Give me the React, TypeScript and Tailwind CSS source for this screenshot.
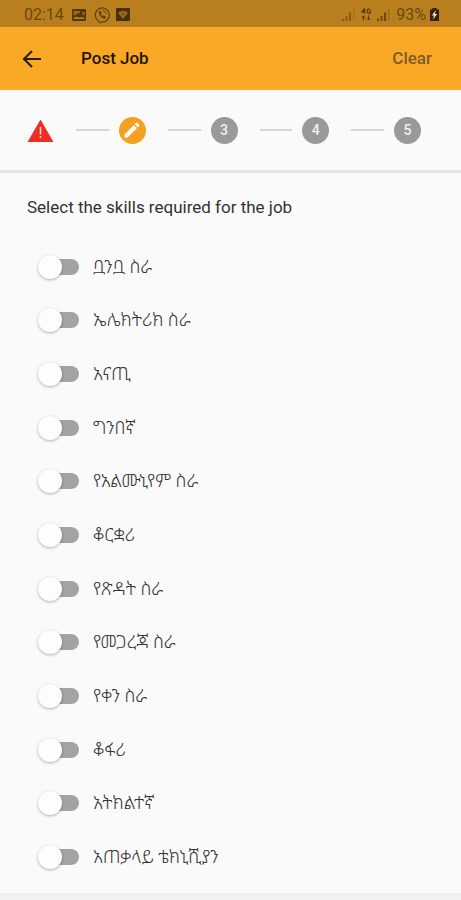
import { useState } from "react";

const skills = [
	{ id: 1, name: "ቧንቧ ስራ" },
	{ id: 2, name: "ኤሌክትሪክ ስራ" },
	{ id: 3, name: "አናጢ" },
	{ id: 4, name: "ግንበኛ" },
	{ id: 5, name: "የአልሙኒየም ስራ" },
	{ id: 6, name: "ቆርቋሪ" },
	{ id: 7, name: "የጽዳት ስራ" },
	{ id: 8, name: "የመጋረጃ ስራ" },
	{ id: 9, name: "የቀን ስራ" },
	{ id: 10, name: "ቆፋሪ" },
	{ id: 11, name: "አትክልተኛ" },
	{ id: 12, name: "አጠቃላይ ቴክኒሺያን" },
];

const SignalIcon = ({ className }: { className: string }) => (
	<svg viewBox="0 0 13 12" fill="currentColor" className={className}>
		<path d="M0 9.5h2V12H0zM3.5 7h2v5h-2zM7 3.5h2V12H7z" />
		<path d="M11 0h1.5v12H11z" opacity="0.35" />
	</svg>
);

const StatusBar = () => (
	<div className="flex h-[27px] items-center bg-[#b97f1e] pr-[22px] pl-6 pt-0.5 text-base text-[#6b480e]">
		<span>02:14</span>
		<svg viewBox="0 0 14 12" className="ml-2 h-3 w-3.5">
			<rect width="14" height="12" rx="1" fill="#53370a" />
			<path d="M1.5 10V9l3-1.500 2.500 1L9.500 8l3 1v1z" fill="#b97f1e" />
			<path d="M1.500 2h7l-1 2-2 .5-2 1.500-2 .5zM10 3h2.500v3l-2 .5z" fill="#9b6a18" />
		</svg>
		<svg
			viewBox="0 0 16 16"
			fill="none"
			stroke="#5f400c"
			className="ml-2 h-4 w-4"
		>
			<path
				d="M5 14.2A7 7 0 1 1 8 15l-3 .8z"
				strokeWidth="1.2"
				strokeLinejoin="round"
			/>
			<path
				d="M5 4.5c-.8 2.5 2.8 7 5.8 7l1-1.8-2-1.2-1 .8C7.800 8.900 6.900 7.900 6.700 6.900l.8-.8-1-2z"
				fill="#5f400c"
				strokeWidth="0.5"
			/>
			<path d="M8.500 3.500c2 .2 3.300 1.500 3.500 3.500" />
		</svg>
		<svg viewBox="0 0 14 13" className="ml-1.5 h-[13px] w-3.5">
			<rect width="14" height="13" rx="1" fill="#49300a" />
			<path d="M2 5c3-3 7-3 10 0l-5 6z" fill="#97681a" />
			<path d="M6 5.500h2V7H6z" fill="#6b480e" />
		</svg>

		<SignalIcon className="ml-auto h-3 w-[13px] opacity-60" />
		<svg viewBox="0 0 10 13" className="ml-1.5 h-[13px] w-2.5" fill="none" stroke="#53370a">
			<path d="M3.500 5.500V.8L.8 4h3.700" strokeWidth="1.200" />
			<path d="M9.300 1.500C8 .5 6 1 6 3s2 2.800 3.300 2V3.300H8" strokeWidth="1.200" />
			<path d="M2.500 12.500V8M.8 9.700 2.500 8l1.700 1.700M7.500 7.500V12M5.800 10.300 7.500 12l1.700-1.700" />
		</svg>
		<SignalIcon className="ml-1.5 h-3 w-[13px]" />
		<span className="ml-1.5">93%</span>
		<svg viewBox="0 0 9 13" className="ml-1 h-[13px] w-[9px]">
			<path d="M2.500 0h4v1.500H9V13H0V1.500h2.500z" fill="#352204" />
			<path d="M5.800 2 1.800 7.500h2.200L3 11.500 7.200 6H5z" fill="#f0ddb5" />
		</svg>
	</div>
);

const Connector = () => (
	<li aria-hidden="true" className="mr-2.5 ml-[22px] h-0.5 flex-1 bg-[#d6d6d6]" />
);

const NumberStep = ({ value }: { value: number }) => (
	<>
		<Connector />
		<li className="flex size-[27px] items-center justify-center rounded-full bg-[#999999] text-sm font-medium text-[#f0f0f0]">
			{value}
		</li>
	</>
);

const Stepper = () => (
	<ol className="flex h-20 items-center pr-10 pl-[27px]">
		<li className="flex size-[27px] items-center justify-center">
			<svg viewBox="0 0 27 27" className="size-[27px]" role="img" aria-label="Step 1 has errors">
				<path d="M13.500 2.500 26.500 25H.5z" fill="#f02d23" />
				<path d="M12.700 10h1.600v7.500h-1.600zM12.700 19h1.600v2h-1.600z" fill="#fbd5d2" />
			</svg>
		</li>
		<Connector />
		<li className="flex size-[27px] items-center justify-center rounded-full bg-[#f3a11f]">
			<svg viewBox="0 0 24 24" fill="#fff" className="size-5" role="img" aria-label="Editing step 2">
				<path d="M3 17.250V21h3.750L17.810 9.940l-3.750-3.750L3 17.250zM20.710 7.040c.39-.39.39-1.020 0-1.410l-2.340-2.340a1 1 0 0 0-1.410 0l-1.830 1.830 3.750 3.750 1.830-1.830z" />
			</svg>
		</li>
		<NumberStep value={3} />
		<NumberStep value={4} />
		<NumberStep value={5} />
	</ol>
);

const App = () => {
	const [selected, setSelected] = useState<number[]>([]);

	const toggle = (id: number) =>
		setSelected((prev) =>
			prev.includes(id) ? prev.filter((s) => s !== id) : [...prev, id],
		);

	return (
		<div className="flex min-h-screen flex-col bg-[#fafafa] font-[Roboto,'Noto_Sans_Ethiopic','Noto_Sans',sans-serif] text-[#333333]">
			<StatusBar />

			{/* App bar */}
			<header className="flex h-[63px] items-center bg-[#faa926] pr-[29px] pl-[22px]">
				<button type="button" aria-label="Back" className="text-[#2a1c04]">
					<svg viewBox="0 0 20 20" fill="none" stroke="currentColor" strokeWidth="2" className="size-5">
						<path d="M19 10H2.500M10 2 2 10l8 8" />
					</svg>
				</button>
				<h1 className="ml-[39px] text-[17px] font-medium text-[#1f1503]">Post Job</h1>
				<button
					type="button"
					className="ml-auto text-[17px] font-medium text-[#80592b]"
					onClick={() => setSelected([])}
				>
					Clear
				</button>
			</header>

			<Stepper />

			{/* Skills */}
			<main className="flex flex-1 flex-col border-t-3 border-[#e6e6e6] pb-[9px]">
				<h2 className="px-[27px] pt-[22px] pb-[21px] text-[17px] leading-6">
					Select the skills required for the job
				</h2>
				<ul className="grid flex-1 auto-rows-fr pl-[42px]">
					{skills.map((skill) => (
						<li key={skill.id} className="flex items-center">
							<label className="flex items-center gap-3.5 text-lg leading-6 font-light">
								<input
									type="checkbox"
									role="switch"
									checked={selected.includes(skill.id)}
									onChange={() => toggle(skill.id)}
									className="relative h-4 w-[37px] appearance-none rounded-full bg-[#a3a3a3] before:absolute before:-top-1 before:-left-1 before:size-6 before:rounded-full before:bg-[#fdfdfd] before:shadow-[0_1px_3px_rgba(0,0,0,0.3)] checked:bg-[#fbd493] checked:before:left-[17px] checked:before:bg-[#faa926]"
								/>
								{skill.name}
							</label>
						</li>
					))}
				</ul>
			</main>
			<div className="h-[7px] bg-[#f1f1f1]" />
		</div>
	);
};

export default App;
